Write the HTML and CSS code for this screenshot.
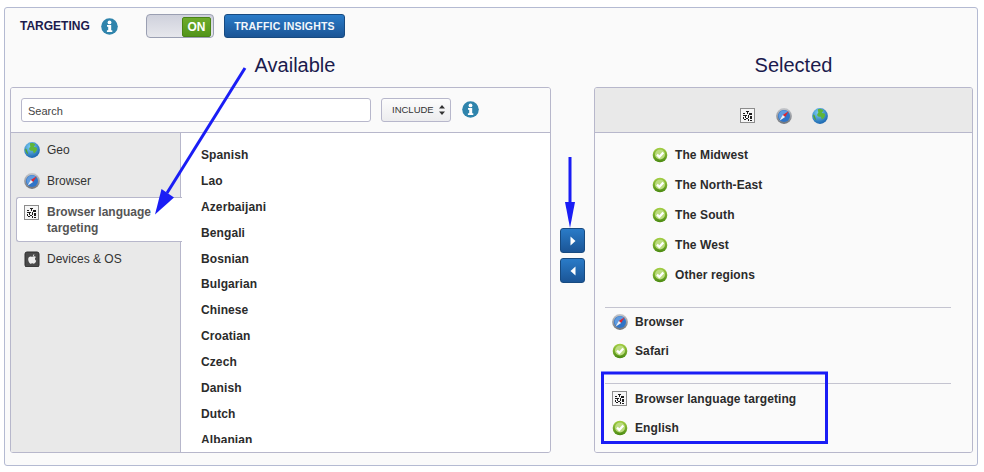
FILE: index.html
```html
<!DOCTYPE html>
<html lang="en">
<head>
<meta charset="utf-8">
<title>Targeting</title>
<link rel="stylesheet" href="styles.css">
</head>
<body>
<svg class="defs" width="0" height="0" aria-hidden="true">
  <defs>
    <radialGradient id="gGlobe" cx="0.4" cy="0.3" r="0.75"><stop offset="0" stop-color="#7cd0f5"/><stop offset="1" stop-color="#1560ac"/></radialGradient>
    <linearGradient id="gCheck" x1="0" y1="0" x2="0" y2="1"><stop offset="0" stop-color="#a5d044"/><stop offset="1" stop-color="#4a8a12"/></linearGradient>
    <linearGradient id="gRim" x1="0" y1="0" x2="0" y2="1"><stop offset="0" stop-color="#c6c8cc"/><stop offset="1" stop-color="#6f737a"/></linearGradient>
    <symbol id="i-info" viewBox="0 0 17 17">
      <circle cx="8.5" cy="8.5" r="8.3" fill="#2f84ac"/>
      <circle cx="8.5" cy="4.4" r="1.9" fill="#fff"/>
      <path d="M6 7h4.200v5.200h1.100v1.800H5.900v-1.800h1.300V8.800H6z" fill="#fff"/>
    </symbol>
    <symbol id="i-globe" viewBox="0 0 16 16">
      <circle cx="8" cy="8" r="7.9" fill="url(#gGlobe)"/>
      <path d="M6 1.200c2-.5 4 0 5.200 1 .4 1-.5 1.600-1.400 1.800-.2 1 1 1.300 1.900 1.300 1.200.2 1.700 1.500 1.200 2.800-.5 1.500-1.700 2.800-3 3.300-.6-1-.4-2-1.200-2.700C7.500 8.800 5.800 8.800 5.300 7.500 4.800 6.200 5.800 5.600 6.300 4.800 6.500 3.800 5.600 2.500 6 1.200z" fill="#5fb53a"/>
      <path d="M1.200 6.500c1 .3 1.800 1.200 2 2.500.2 1.200 1 2 1 3.400C2.400 11.200 1 9 1.200 6.500z" fill="#4ea62f"/>
    </symbol>
    <symbol id="i-safari" viewBox="0 0 16 16">
      <circle cx="8" cy="8" r="7.9" fill="url(#gRim)"/>
      <circle cx="8" cy="8" r="6" fill="#2f74c8"/>
      <path d="M5 3.200a5.600 5.600 0 0 1 7 .8L4 11.500a5.600 5.600 0 0 1 1-8.300z" fill="#5f9be0"/>
      <path d="M12.600 3.300 9.100 9.100 6.800 6.900z" fill="#e3242b"/>
      <path d="M3.500 12.700 6.800 6.900 9.100 9.100z" fill="#eef1f6"/>
    </symbol>
    <symbol id="i-lang" viewBox="0 0 16 16">
      <rect x="0.500" y="0.500" width="14" height="14" fill="#f6f6f6" stroke="#8c8c8c"/>
      <path d="M3 5h2v1H3zM6 3h3v1H6zM7 4h1v2H7zM9 5h3v2H9zM3 7h4v1H3zM5 8h1v2H5zM8 7h1v3H8zM10 8h2v3h-2zM3 9h1v2H3zM6 10h2v1H6zM4 11h2v1H4zM8 11h1v2H8zM10 12h2v1h-2z" fill="#1d1d1d"/>
    </symbol>
    <symbol id="i-device" viewBox="-0.500 -0.500 16 16">
      <rect x="0.500" y="0.500" width="14" height="15" rx="2" fill="#4a4a4a" stroke="#2c2c2c"/>
      <path d="M9.800 2.800c-.9.200-1.500.9-1.400 1.900.9 0 1.500-.8 1.400-1.900zM7.800 5.200c-.6 0-1-.3-1.700-.3-1.300 0-2.400 1-2.400 2.800 0 1.900 1.400 4.500 2.500 4.500.6 0 .9-.4 1.600-.4s1 .4 1.600.4c1 0 1.900-1.700 2.300-2.900-1.600-.7-1.700-3-.1-3.700-.6-.6-1.400-.9-2-.9-.7 0-1.200.5-1.800.5z" fill="#ececec"/>
    </symbol>
    <symbol id="i-check" viewBox="-0.500 -0.500 16 16">
      <circle cx="7.500" cy="7.500" r="7.300" fill="url(#gCheck)"/>
      <circle cx="7.500" cy="7" r="5" fill="#bcdc80"/>
      <path d="M4.500 7.100 6.800 9.400 10.800 4.900" fill="none" stroke="#fff" stroke-width="2.200"/>
    </symbol>
  </defs>
</svg>

<main class="outer">
  <header class="toolbar">
    <h1 class="toolbar-title">TARGETING</h1>
    <svg class="icon-info"><use href="#i-info"/></svg>
    <div class="toggle"><span class="toggle-knob">ON</span></div>
    <button class="btn-insights" type="button">TRAFFIC INSIGHTS</button>
  </header>

  <div class="columns">
    <section class="col-available">
      <h2 class="col-title">Available</h2>
      <div class="panel">
        <div class="panel-head">
          <input class="search" type="text" value="Search">
          <div class="select">INCLUDE
            <svg class="select-arrows" viewBox="0 0 6 10"><path d="M3 0 6 3.500H0zM3 10 0 6.500H6z" fill="#333"/></svg>
          </div>
          <svg class="icon-info"><use href="#i-info"/></svg>
        </div>
        <div class="panel-body">
          <nav class="side">
            <div class="side-item"><svg class="ic"><use href="#i-globe"/></svg><span>Geo</span></div>
            <div class="side-item"><svg class="ic"><use href="#i-safari"/></svg><span>Browser</span></div>
            <div class="side-item active"><svg class="ic"><use href="#i-lang"/></svg><span>Browser language targeting</span></div>
            <div class="side-item"><svg class="ic"><use href="#i-device"/></svg><span>Devices &amp; OS</span></div>
          </nav>
          <ul class="lang-list">
            <li>Spanish</li><li>Lao</li><li>Azerbaijani</li><li>Bengali</li><li>Bosnian</li><li>Bulgarian</li>
            <li>Chinese</li><li>Croatian</li><li>Czech</li><li>Danish</li><li>Dutch</li><li>Albanian</li>
          </ul>
        </div>
      </div>
    </section>

    <div class="movers">
      <button class="mover" type="button" aria-label="Add"><svg viewBox="0 0 6 10"><path d="M0.500 0.500 5.500 5 0.500 9.500z" fill="#fff"/></svg></button>
      <button class="mover" type="button" aria-label="Remove"><svg viewBox="0 0 6 10"><path d="M5.500 0.500 0.500 5 5.500 9.500z" fill="#fff"/></svg></button>
    </div>

    <section class="col-selected">
      <h2 class="col-title">Selected</h2>
      <div class="panel">
        <div class="selected-head">
          <svg class="ic"><use href="#i-lang"/></svg>
          <svg class="ic"><use href="#i-safari"/></svg>
          <svg class="ic"><use href="#i-globe"/></svg>
        </div>
        <div class="selected-body">
          <ul class="regions">
            <li><svg class="ic"><use href="#i-check"/></svg>The Midwest</li>
            <li><svg class="ic"><use href="#i-check"/></svg>The North-East</li>
            <li><svg class="ic"><use href="#i-check"/></svg>The South</li>
            <li><svg class="ic"><use href="#i-check"/></svg>The West</li>
            <li><svg class="ic"><use href="#i-check"/></svg>Other regions</li>
          </ul>
          <div class="group">
            <div class="group-row"><svg class="ic"><use href="#i-safari"/></svg>Browser</div>
            <div class="group-row"><svg class="ic"><use href="#i-check"/></svg>Safari</div>
          </div>
          <div class="group group-last">
            <div class="group-row"><svg class="ic"><use href="#i-lang"/></svg>Browser language targeting</div>
            <div class="group-row"><svg class="ic"><use href="#i-check"/></svg>English</div>
          </div>
        </div>
      </div>
    </section>
  </div>
</main>

<svg class="annotations" viewBox="0 0 984 472" aria-hidden="true">
  <path d="M245 68 167 193" stroke="#1a1df5" stroke-width="3" fill="none"/>
  <path d="M155 214.500 161.500 189 174 197.500z" fill="#1a1df5"/>
  <path d="M570 157V204" stroke="#1a1df5" stroke-width="3" fill="none"/>
  <path d="M565 202H575L570 228z" fill="#1a1df5"/>
  <rect x="602.500" y="373" width="224" height="69.500" fill="none" stroke="#1a1df5" stroke-width="3"/>
</svg>
</body>
</html>
```

FILE: styles.css
```css
* { box-sizing: border-box; }

html, body { margin: 0; padding: 0; }

body {
  position: relative;
  width: 984px;
  height: 472px;
  overflow: hidden;
  background: #fff;
  font-family: "Liberation Sans", Arial, sans-serif;
  color: #2b2b2b;
}

.defs { position: absolute; }

.annotations {
  position: absolute;
  left: 0;
  top: 0;
  width: 984px;
  height: 472px;
  pointer-events: none;
}

.outer {
  width: 974px;
  height: 459px;
  margin: 7px 0 0 4px;
  padding: 0 4px 0 5px;
  background: #fafafa;
  border: 1px solid #b4bad2;
  border-radius: 3px;
}

.toolbar {
  display: flex;
  align-items: center;
  height: 36px;
  padding-left: 10px;
}

.toolbar-title {
  margin: 0 11px 0 0;
  width: 70px;
  font-size: 12px;
  font-weight: 700;
  color: #1b1b4d;
  white-space: nowrap;
}

.icon-info { width: 17px; height: 17px; flex: none; }

.toggle {
  display: flex;
  justify-content: flex-end;
  width: 68px;
  height: 24px;
  margin-left: 28px;
  padding: 2px;
  background: linear-gradient(#cfd1dc, #e6e7ec);
  border: 1px solid #9a9fb2;
  border-radius: 4px;
}

.toggle-knob {
  width: 29px;
  height: 20px;
  background: linear-gradient(#6eab2c, #52951a);
  border: 1px solid #4a8416;
  border-radius: 2px;
  color: #fff;
  font-size: 12px;
  font-weight: 700;
  line-height: 18px;
  text-align: center;
}

.btn-insights {
  width: 121px;
  height: 24px;
  margin-left: 10px;
  padding: 0;
  background: linear-gradient(#2a7bc8, #1b5596);
  border: 1px solid #174a80;
  border-radius: 3px;
  color: #f4f8fc;
  font-family: inherit;
  font-size: 10.5px;
  font-weight: 700;
  letter-spacing: 0.2px;
}

.columns {
  display: grid;
  grid-template-columns: 541px 43px 379px;
}

.col-title {
  margin: 0;
  height: 43px;
  padding-top: 9px;
  font-size: 20px;
  font-weight: 400;
  line-height: 24px;
  color: #1b1b4d;
  text-align: center;
}

.col-available .col-title { margin-right: -29px; }
.col-selected .col-title { margin-left: 20px; }

.panel {
  height: 366px;
  display: flex;
  flex-direction: column;
  border: 1px solid #b7b7cb;
  border-radius: 3px;
  overflow: hidden;
}

.panel-head {
  display: flex;
  align-items: center;
  flex: none;
  height: 45px;
  padding: 0 0 1px 10px;
  background: #fafafa;
  border-bottom: 1px solid #b7b7cb;
}

.search {
  width: 350px;
  height: 24px;
  padding: 2px 6px 0;
  background: #fff;
  border: 1px solid #b7b7cb;
  border-radius: 3px;
  color: #444;
  font-family: inherit;
  font-size: 11px;
}

.select {
  display: flex;
  align-items: center;
  justify-content: space-between;
  width: 70px;
  height: 24px;
  margin: 0 11px 0 10px;
  padding: 0 5px 0 10px;
  background: linear-gradient(#fcfcfc, #ececee);
  border: 1px solid #b7b7cb;
  border-radius: 3px;
  color: #333;
  font-size: 9.5px;
}

.select-arrows { width: 6px; height: 10px; }

.panel-body {
  display: flex;
  flex: 1;
  min-height: 0;
  background: #fff;
}

.side {
  flex: none;
  width: 170px;
  padding: 1px 0 0 5px;
  background: #e9e9e9;
  border-right: 1px solid #b7b7cb;
}

.side-item {
  display: flex;
  align-items: center;
  height: 31px;
  padding-left: 8px;
  font-size: 12px;
  color: #333;
}

.side-item .ic { margin-right: 7px; }

.side-item.active {
  position: relative;
  align-items: flex-start;
  width: 166px;
  height: 45px;
  margin: 1px -1px 1px 0;
  padding-top: 6px;
  padding-left: 7px;
  background: #fff;
  border: 1px solid #b7b7cb;
  border-right: 0;
  border-radius: 3px 0 0 3px;
  color: #555;
  font-weight: 700;
  line-height: 16px;
}

.side-item.active .ic { margin-top: 1px; }

.ic { width: 16px; height: 16px; flex: none; }

.lang-list {
  flex: 1;
  height: 310px;
  margin: 0;
  padding: 10px 0 0 20px;
  list-style: none;
  overflow: hidden;
  font-size: 12px;
  font-weight: 700;
  letter-spacing: 0.1px;
  color: #2b2b2b;
}

.lang-list li { height: 25.9px; line-height: 25.9px; }

.movers {
  display: flex;
  flex-direction: column;
  align-items: center;
  gap: 5px;
  padding: 184px 0 0 0;
}

.mover {
  display: flex;
  align-items: center;
  justify-content: center;
  width: 25px;
  height: 25px;
  padding: 0;
  background: linear-gradient(#2a7bc8, #1b5596);
  border: 1px solid #174a80;
  border-radius: 3px;
}

.mover svg { width: 6px; height: 10px; }

.selected-head {
  display: flex;
  align-items: flex-end;
  justify-content: center;
  gap: 20px;
  flex: none;
  height: 45px;
  padding-bottom: 8px;
  background: #e9e9e9;
  border-bottom: 1px solid #b7b7cb;
}

.selected-body {
  flex: 1;
  padding: 7px 21px 0 10px;
  background: #fafafa;
}

.regions {
  margin: 0;
  padding: 0 0 0 47px;
  list-style: none;
}

.regions li,
.group-row {
  display: flex;
  align-items: center;
  gap: 7px;
  font-size: 12px;
  font-weight: 700;
  letter-spacing: 0.1px;
  color: #2b2b2b;
}

.regions li { height: 30px; }

.group {
  margin-top: 17px;
  padding: 0 0 0 7px;
  border-top: 1px solid #c4c4d0;
}

.group-row { height: 28.5px; }

.group-last { margin-top: 18px; padding-top: 1px; }
```
